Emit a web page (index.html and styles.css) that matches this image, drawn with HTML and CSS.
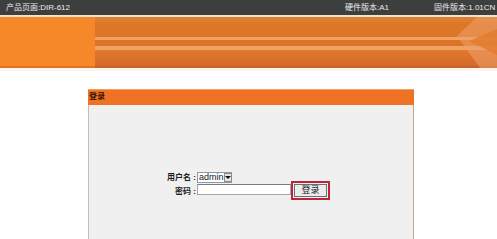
FILE: index.html
```html
<!DOCTYPE html>
<html lang="zh-CN">
<head>
<meta charset="utf-8">
<title>DIR-612</title>
<link rel="stylesheet" href="styles.css">
</head>
<body>
<div class="topbar">
  <span class="product">产品页面:DIR-612</span>
  <span class="hw">硬件版本:A1</span>
  <span class="fw">固件版本:1.01CN</span>
</div>
<div class="topline"></div>
<div class="banner">
  <div class="banner-solid"></div>
  <svg class="banner-art" width="402" height="51" viewBox="0 0 402 51" preserveAspectRatio="none">
    <defs>
      <linearGradient id="low" x1="0" y1="0" x2="0" y2="1">
        <stop offset="0" stop-color="#e07a2c"/>
        <stop offset="1" stop-color="#d4682a"/>
      </linearGradient>
    </defs>
    <rect x="0" y="0" width="402" height="51" fill="#de7628"/>
    <rect x="0" y="0" width="402" height="5" fill="#e07e30"/>
    <rect x="0" y="20" width="402" height="3" fill="#f0a264"/>
    <rect x="0" y="23" width="402" height="6" fill="#dc7428"/>
    <rect x="0" y="29" width="402" height="4" fill="#f0a264"/>
    <rect x="0" y="33" width="402" height="16" fill="url(#low)"/>
    <rect x="0" y="49" width="402" height="2" fill="#c4622a"/>
    <polygon points="362,19 382,0 402,0 402,51 385,51" fill="#eea06a" opacity="0.55"/>
    <polygon points="374,24 402,12 402,38" fill="#e27a30" opacity="0.8"/>
  </svg>
</div>
<div class="content">
  <div class="box">
    <div class="box-head">登录</div>
    <div class="box-body">
      <div class="form">
        <span class="label l1">用户名 :</span>
        <div class="combo">
          <span class="combo-text">admin</span>
          <span class="combo-arrow"><span class="tri"></span></span>
        </div>
        <span class="empty"></span>
        <span class="label l2">密码 :</span>
        <input class="pwd" type="password">
        <div class="btn-mark"><button class="btn" type="button">登录</button></div>
      </div>
    </div>
  </div>
</div>
</body>
</html>
```

FILE: styles.css
```css
* { box-sizing: border-box; }
html, body { margin: 0; padding: 0; background: #ffffff; }
html { overflow: hidden; }
body {
  font-family: "Liberation Sans", "Noto Sans CJK SC", sans-serif;
  overflow: hidden;
  height: 239px;
}
.topbar {
  height: 15px;
  background: #3d3f3f;
  color: #ececec;
  font-size: 8px;
  line-height: 15px;
  display: flex;
  white-space: nowrap;
}
.product { margin-left: 6px; }
.hw { margin-left: 275px; }
.fw { margin-left: 45px; }
.topline { height: 2px; background: #f2e4cc; }
.banner {
  height: 51px;
  display: flex;
}
.banner-solid {
  width: 95px;
  background: #f6882a;
  border-bottom: 2px solid #e07424;
}
.banner-art { display: block; flex: 1; height: 51px; }
.content {
  padding-top: 18px;
  padding-left: 88px;
  border-top: 3px solid #fbf5ee;
}
.box { width: 326px; }
.box-head {
  height: 16px;
  background: #f07224;
  border-top: 1px solid #f6a060;
  color: #3a1200;
  font-weight: bold;
  font-size: 8px;
  line-height: 14px;
  padding-left: 1px;
}
.box-body {
  height: 134px;
  background: #f0f0f0;
  border-left: 1px solid #c9bcae;
  border-right: 1px solid #c4a888;
  padding-top: 67px;
}
.form {
  display: grid;
  grid-template-columns: 108px 94px auto;
  align-items: start;
}
.label {
  text-align: right;
  font-size: 8px;
  font-weight: bold;
  color: #1e1e1e;
  padding-right: 1px;
  line-height: 11px;
}
.l2 { margin-top: 3px; }
.combo {
  width: 35px;
  height: 11px;
  border: 1px solid #7f9db9;
  background: #ffffff;
  display: flex;
  align-items: center;
}
.combo-text {
  font-size: 9px;
  color: #202020;
  line-height: 9px;
  padding-left: 1px;
  flex: 1;
}
.combo-arrow {
  width: 10px;
  height: 9px;
  background: #e4e4e4;
  border: 1px solid #8a8a8a;
  display: flex;
  align-items: center;
  justify-content: center;
}
.tri {
  width: 0;
  height: 0;
  border-left: 3px solid transparent;
  border-right: 3px solid transparent;
  border-top: 3px solid #101010;
}
.pwd {
  margin: 1px 0 0 0;
  width: 94px;
  height: 11px;
  padding: 0;
  border: 1px solid #a7a7a7;
  border-top-color: #7a7a7a;
  background: #ffffff;
  outline: none;
}
.btn-mark {
  margin-top: -2px;
  width: 39px;
  height: 19px;
  border: 2px solid #b8283a;
  padding: 1px;
  display: flex;
}
.btn {
  width: 100%;
  height: 100%;
  margin: 0;
  padding: 0;
  border: 1px solid #6f6f6f;
  background: #ececec;
  font-family: "Liberation Sans", "Noto Sans CJK SC", sans-serif;
  font-size: 9px;
  line-height: 9px;
  color: #202020;
}
```
